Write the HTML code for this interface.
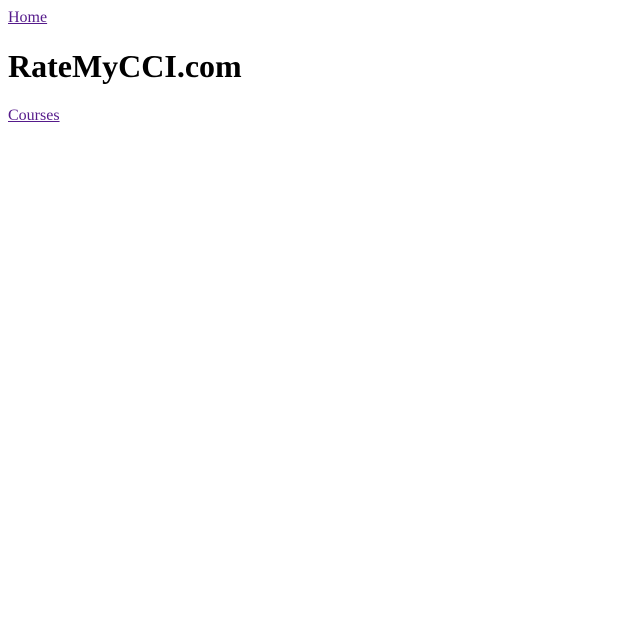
<!DOCTYPE html>
<html><head><meta charset="utf-8"><style>
body{margin:9px 8px 8px 8px;font-family:"Liberation Serif",serif;font-size:16px;background:#fff;color:#000}
a{color:#551A8B}
h1{font-size:32px;margin:21.44px 0}
</style></head><body>
<div><a href="#">Home</a></div>
<h1>RateMyCCI.com</h1>
<div><a href="#">Courses</a></div>
</body></html>
